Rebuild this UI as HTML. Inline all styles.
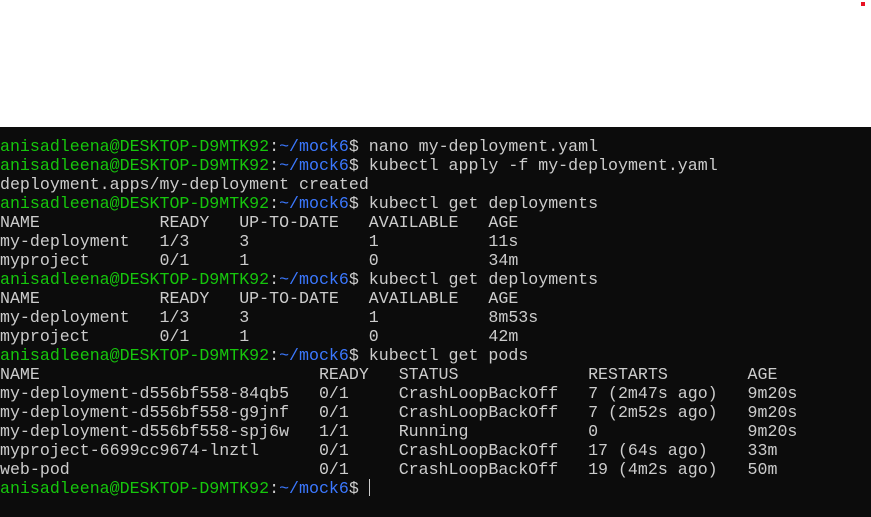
<!DOCTYPE html>
<html><head><style>
html,body{margin:0;padding:0;width:871px;height:517px;overflow:hidden;background:#fff}
.t{position:absolute;left:0;top:127px;width:871px;height:390px;background:#0c0c0c}
pre{position:absolute;left:0;top:9.5px;margin:0;font-family:"Liberation Mono",monospace;font-size:16.63px;line-height:19px;color:#cccccc}
.g{color:#16c60c}.b{color:#3b78ff}
.cur{display:inline-block;width:1px;height:17px;background:#ccc;vertical-align:-3px}
.dot{position:absolute;left:861px;top:2px;width:4px;height:4px;background:#e81123}
</style></head><body>
<div class="dot"></div>
<div class="t"><pre><span class="g">anisadleena@DESKTOP-D9MTK92</span>:<span class="b">~/mock6</span>$ nano my-deployment.yaml
<span class="g">anisadleena@DESKTOP-D9MTK92</span>:<span class="b">~/mock6</span>$ kubectl apply -f my-deployment.yaml
deployment.apps/my-deployment created
<span class="g">anisadleena@DESKTOP-D9MTK92</span>:<span class="b">~/mock6</span>$ kubectl get deployments
NAME            READY   UP-TO-DATE   AVAILABLE   AGE
my-deployment   1/3     3            1           11s
myproject       0/1     1            0           34m
<span class="g">anisadleena@DESKTOP-D9MTK92</span>:<span class="b">~/mock6</span>$ kubectl get deployments
NAME            READY   UP-TO-DATE   AVAILABLE   AGE
my-deployment   1/3     3            1           8m53s
myproject       0/1     1            0           42m
<span class="g">anisadleena@DESKTOP-D9MTK92</span>:<span class="b">~/mock6</span>$ kubectl get pods
NAME                            READY   STATUS             RESTARTS        AGE
my-deployment-d556bf558-84qb5   0/1     CrashLoopBackOff   7 (2m47s ago)   9m20s
my-deployment-d556bf558-g9jnf   0/1     CrashLoopBackOff   7 (2m52s ago)   9m20s
my-deployment-d556bf558-spj6w   1/1     Running            0               9m20s
myproject-6699cc9674-lnztl      0/1     CrashLoopBackOff   17 (64s ago)    33m
web-pod                         0/1     CrashLoopBackOff   19 (4m2s ago)   50m
<span class="g">anisadleena@DESKTOP-D9MTK92</span>:<span class="b">~/mock6</span>$ <span class="cur"></span></pre></div>
</body></html>
